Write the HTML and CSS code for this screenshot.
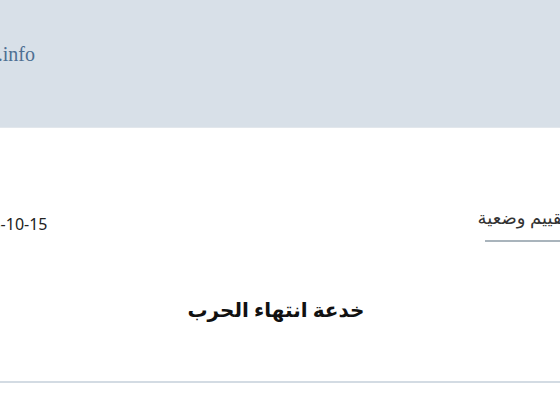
FILE: index.html
```html
<!DOCTYPE html>
<html lang="ar" dir="rtl">
<head>
<meta charset="utf-8">
<title>خدعة انتهاء الحرب</title>
<link rel="stylesheet" href="styles.css">
</head>
<body>
<header class="site-header">
  <div class="header-inner">
    <a class="site-link" href="#">www.example.info</a>
  </div>
</header>
<main class="article">
  <div class="meta-row">
    <div class="category"><span class="category-text">تقييم وضعية</span></div>
    <div class="date">2015-10-15</div>
  </div>
  <h1 class="title">خدعة انتهاء الحرب</h1>
  <hr class="rule">
</main>
</body>
</html>
```

FILE: styles.css
```css
html, body {
  margin: 0;
  padding: 0;
  background: #ffffff;
  overflow: hidden;
}
body {
  font-family: "Noto Sans", "DejaVu Sans", sans-serif;
  color: #222222;
}
.site-header {
  background: #d8e0e8;
  height: 127px;
  border-bottom: 1px solid #e2e7ec;
}
.header-inner {
  display: flex;
  justify-content: flex-end;
  padding-top: 42px;
}
.site-link {
  display: block;
  width: 35px;
  text-align: right;
  white-space: nowrap;
  font-family: "Liberation Serif", serif;
  font-size: 20px;
  line-height: 24px;
  color: #4e6f92;
  text-decoration: none;
}
.article {
  padding-top: 78px;
}
.meta-row {
  display: flex;
  justify-content: space-between;
  align-items: flex-start;
  margin: 0 -7px 0 -36px;
}
.category {
  font-size: 18px;
  line-height: 22px;
  color: #333333;
}
.category-text {
  display: block;
  padding-bottom: 12px;
}
.category::after {
  content: "";
  display: block;
  height: 2px;
  background: #a9b4bc;
  margin-left: 7px;
}
.date {
  direction: ltr;
  font-size: 16px;
  line-height: 20px;
  color: #222222;
  padding-top: 8px;
}
.title {
  margin: 54px 0 0;
  text-align: center;
  font-size: 20px;
  line-height: 28px;
  font-weight: 700;
  color: #111111;
  padding-right: 8px;
}
.rule {
  margin: 57px 0 0;
  border: 0;
  height: 2px;
  background: #d3dbe3;
}
```
